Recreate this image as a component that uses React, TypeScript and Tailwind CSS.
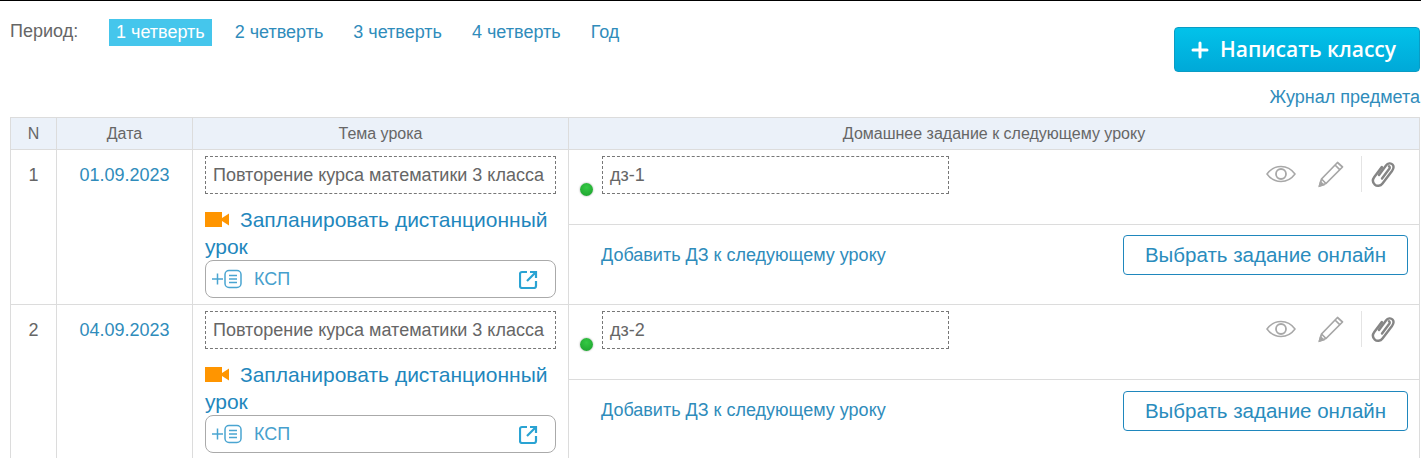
import { Plus } from 'lucide-react'

const PERIODS = ['1 четверть', '2 четверть', '3 четверть', '4 четверть', 'Год']
const LESSONS = [
  { n: 1, date: '01.09.2023', hw: 'дз-1', btnClass: 'mt-0' },
  { n: 2, date: '04.09.2023', hw: 'дз-2', btnClass: 'mt-px' },
]

function EyeIcon() {
  return (
    <svg width="30" height="20" viewBox="0 0 30 20" fill="none" stroke="#a8a8a8">
      <path d="M1 10C5 4.5 10 2.5 15 2.5S25 4.5 29 10C25 15.5 20 17.5 15 17.5S5 15.5 1 10Z" strokeWidth="1.5"/>
      <circle cx="15" cy="10" r="5" strokeWidth="1.8"/>
    </svg>
  )
}

function PencilIcon() {
  return (
    <svg width="28" height="28" viewBox="0 0 28 28" fill="none" stroke="#a6a6a6" strokeWidth="1.7">
      <path d="M20.5 2.5L25.5 7L9 23.5L2.5 26L4.5 19Z" strokeLinejoin="round"/>
      <path d="M18 5L23 9.8M4.5 19L9 23.5"/>
      <path d="M2.5 26L3.6 22L6.4 24.8Z" fill="#999"/>
    </svg>
  )
}

function ClipIcon() {
  return (
    <svg width="24" height="28" viewBox="0 0 24 28" fill="none" stroke="#858585" strokeWidth="2.4" strokeLinecap="round">
      <path d="M8 15L15 5.5C16.8 3 20 2.8 21.5 4.5C23 6.2 22.8 8.5 21 11L11.5 23.5C9.5 26.2 5.8 26.5 3.8 24.6C1.6 22.6 1.5 19.5 3.3 17L10.8 7"/>
      <path d="M11 18.5L18.3 8.8C19 7.8 18.8 6.8 18 6.3"/>
    </svg>
  )
}

function VideoIcon() {
  return (
    <svg width="24" height="15" viewBox="0 0 24 15" className="shrink-0" fill="#ff9500">
      <rect x="0" y="0" width="17" height="15"/>
      <path d="M17 6L24 1.5V13.5L17 9Z"/>
    </svg>
  )
}

function KspIcon() {
  return (
    <svg width="32" height="20" viewBox="0 0 32 20" fill="none" stroke="#4aa5d1" strokeWidth="1.5">
      <path d="M0 10H11M5.5 4.5V15.5"/>
      <rect x="13" y="1.5" width="16" height="17" rx="4"/>
      <path d="M17 6.5H25M17 10H25M17 13.5H25"/>
    </svg>
  )
}

function OpenIcon() {
  return (
    <svg width="19" height="19" viewBox="0 0 19 19" fill="none" stroke="#2aa3d3" strokeWidth="2.2">
      <path d="M8 2H3A2 2 0 0 0 1 4V16A2 2 0 0 0 3 18H15A2 2 0 0 0 17 16V11"/>
      <path d="M8 11L16 3M11 2H17V8"/>
    </svg>
  )
}

function LessonRow({ n, date, hw, btnClass }: { n: number; date: string; hw: string; btnClass: string }) {
  return (
    <div className="flex h-[155px] border-b border-[#dcdcdc] text-[18px] leading-[24px]">
      <div className="w-[45px] shrink-0 pt-[13px] text-center text-[#666]">{n}</div>
      <div className="w-[136px] shrink-0 border-l border-[#dcdcdc] pt-[13px] text-center text-[#2f8cbb]">{date}</div>
      <div className="w-[376px] shrink-0 border-l border-[#dcdcdc] pl-[12px] pr-[12px] pt-[6px]">
        <div className="flex h-[38px] items-center whitespace-nowrap border border-dashed border-[#777] pl-[7px] text-[#666]">
          Повторение курса математики 3 класса
        </div>
        <div className="mt-[12px] text-[21px] leading-[27px] text-[#1f87bd]">
          <span className="mr-[11px] inline-block"><VideoIcon /></span>
          Запланировать дистанционный урок
        </div>
        <div className="flex h-[38px] items-center rounded-[8px] border border-[#aaa] pl-[6px] pr-[17px] text-[#46a0cd]">
          <KspIcon />
          <span className="ml-[10px]">КСП</span>
          <span className="ml-auto flex"><OpenIcon /></span>
        </div>
      </div>
      <div className="flex-1 border-l border-[#dcdcdc]">
        <div className="flex h-[75px] border-b border-[#dcdcdc] pt-[6px]">
          <div className="ml-[11px] mt-[27px] h-[13px] w-[13px] rounded-full bg-[radial-gradient(circle_at_50%_35%,#35c944,#1a9e2c)] shadow-[0_0_2px_#999]" />
          <div className="ml-[9px] h-[38px] w-[347px] border border-dashed border-[#777] pl-[7px] pt-[6px] text-[#666]">{hw}</div>
          <div className="ml-auto flex h-[36px] items-center pr-[24px]">
            <EyeIcon />
            <span className="ml-[21px] flex"><PencilIcon /></span>
            <span className="ml-[16px] mr-[9px] h-[36px] w-px bg-[#e4e4e4]" />
            <ClipIcon />
          </div>
        </div>
        <div className="flex h-[79px] items-start pl-[32px] pr-[11px] pt-[10px]">
          <span className="mt-[8px] text-[#2f8cbb]">Добавить ДЗ к следующему уроку</span>
          <span className={`ml-auto flex h-[40px] w-[285px] items-center justify-center rounded-[4px] border border-[#1f87bd] text-[20.5px] text-[#2a8cbd] ${btnClass}`}>
            Выбрать задание онлайн
          </span>
        </div>
      </div>
    </div>
  )
}

export default function App() {
  return (
    <div className="h-[458px] overflow-hidden border-t border-black bg-white font-['Liberation_Sans',Arial,sans-serif]">
      <div className="flex justify-between pl-[10px] pr-px">
        <div className="flex pt-[18px] text-[18px] leading-[26px]">
          <span className="w-[99px] leading-[24px] text-[#666]">Период:</span>
          {PERIODS.map((p, i) => (
            <span key={p} className={`mr-[16px] h-[27px] px-[7px] ${i === 0 ? 'bg-[#45c6ec] text-white' : 'text-[#2f8cbb]'}`}>{p}</span>
          ))}
        </div>
        <div className="flex flex-col items-end pt-[26px]">
          <button className="flex h-[45px] w-[246px] items-center rounded-[4px] border border-[#0a9cc4] bg-gradient-to-b from-[#02c2ea] to-[#00a9d8] pl-[13px] font-['Open_Sans',sans-serif] text-[21px] font-semibold text-white">
            <Plus size={24} strokeWidth={3} />
            <span className="ml-[8px]">Написать классу</span>
          </button>
          <a className="mt-[13px] text-[18px] leading-[24px] text-[#2f8cbb]">Журнал предмета</a>
        </div>
      </div>
      <div className="ml-[10px] mr-px mt-[8px] border-l border-r border-t border-[#dcdcdc]">
        <div className="flex h-[32px] items-center border-b border-[#dcdcdc] bg-[#ebf1f9] text-[16px] text-[#666]">
          <div className="flex h-full w-[45px] shrink-0 items-center justify-center">N</div>
          <div className="flex h-full w-[136px] shrink-0 items-center justify-center border-l border-[#dcdcdc]">Дата</div>
          <div className="flex h-full w-[376px] shrink-0 items-center justify-center border-l border-[#dcdcdc]">Тема урока</div>
          <div className="flex h-full flex-1 items-center justify-center border-l border-[#dcdcdc]">Домашнее задание к следующему уроку</div>
        </div>
        {LESSONS.map(l => <LessonRow key={l.n} {...l} />)}
      </div>
    </div>
  )
}
